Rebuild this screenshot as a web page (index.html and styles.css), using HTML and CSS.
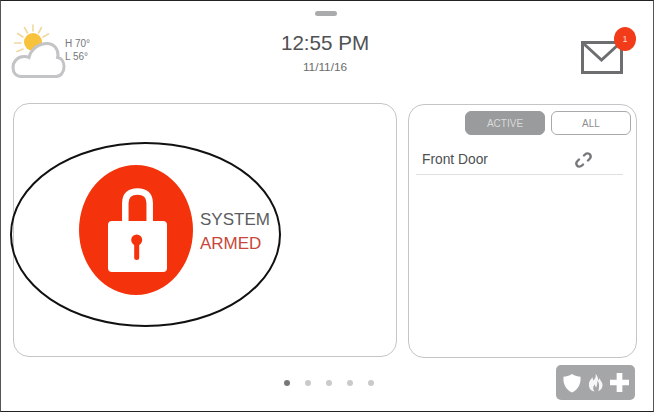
FILE: index.html
```html
<!DOCTYPE html>
<html lang="en">
<head>
<meta charset="utf-8">
<title>Security panel</title>
<link rel="stylesheet" href="styles.css">
</head>
<body>
<div class="screen">
  <div class="handle"></div>
  <header class="top">
    <div class="weather">
      <svg class="weather-icon" width="54" height="56" viewBox="0 0 54 56">
        <g stroke="#f0d9a0" stroke-width="1.600" stroke-linecap="round">
          <path d="M22 1V7M13.500 3.500L16.500 9M6.500 9.500L12 13M3.500 19H10M6 27.500L12 25M30.500 3.500L27.500 9M37.500 10L32 13"/>
        </g>
        <circle cx="22" cy="18" r="9" fill="#f7c23c"/>
        <path d="M10 52.500C5 52.500 2 48.500 2 43.500C2 37 7 32.500 13 32.500C15 32.500 17 33 18 33.500C20 25 28 19.500 36 19.500C43 19.500 47 25 47 31L46.500 33.500C51 34 53 38.500 53 43C53 48.500 49.500 52.500 45 52.500Z" fill="#fff" stroke="#c2c4c6" stroke-width="3"/>
      </svg>
      <div class="temps">
        <span>H 70°</span>
        <span>L 56°</span>
      </div>
    </div>
    <div class="clock">
      <div class="time">12:55 PM</div>
      <div class="date">11/11/16</div>
    </div>
    <div class="mail">
      <svg width="42" height="33" viewBox="0 0 42 33">
        <path d="M1.500 1.500H40.500V31.500H1.500Z" fill="#fff" stroke="#6d6e70" stroke-width="3"/>
        <path d="M3 3L20.500 19L38 3" fill="none" stroke="#6d6e70" stroke-width="3"/>
      </svg>
      <span class="badge">1</span>
    </div>
  </header>
  <main class="panels">
    <section class="status-card">
      <div class="ring"></div>
      <div class="status">
        <div class="lock-disc">
          <svg width="64" height="84" viewBox="-4 0 64 84">
            <path d="M17.300 36V15C17.300 7 22 3.500 29.500 3.500C37 3.500 41.700 7 41.700 15V36" fill="none" stroke="#fff" stroke-width="6.500"/>
            <rect x="0" y="33" width="59" height="51" rx="4" fill="#fff"/>
            <circle cx="28.700" cy="52" r="5.500" fill="#f4330d"/>
            <rect x="26.200" y="53" width="5" height="19" rx="2.500" fill="#f4330d"/>
          </svg>
        </div>
        <div class="status-text">
          <div class="system">SYSTEM</div>
          <div class="armed">ARMED</div>
        </div>
      </div>
    </section>
    <section class="zones-card">
      <div class="tabs">
        <span class="tab tab-active">ACTIVE</span>
        <span class="tab">ALL</span>
      </div>
      <div class="zone">
        <span>Front Door</span>
        <svg class="zone-icon" width="17" height="16" viewBox="0 0 17 16">
          <g fill="none" stroke="#77787a" stroke-width="2.400" stroke-linecap="round">
            <path d="M9 3.500L10 2.500C11.500 1 14 1 15 2.500C16 4 15.500 6 14.500 7L13 8.500"/>
            <path d="M8 12.500L7 13.500C5.500 15 3 15 2 13.500C1 12 1.500 10 2.500 9L4 7.500"/>
          </g>
        </svg>
      </div>
    </section>
  </main>
  <footer class="bottom">
    <div class="dots">
      <i class="dot dot-on"></i><i class="dot"></i><i class="dot"></i><i class="dot"></i><i class="dot"></i>
    </div>
    <div class="emergency">
      <svg width="18" height="20" viewBox="0 0 18 22" preserveAspectRatio="none"><path d="M9 1C12 3 15 4 17.500 4C18 11 16 17.500 9 21.500C2 17.500 0 11 .5 4C3 4 6 3 9 1Z" fill="#fff"/></svg>
      <svg width="15" height="19" viewBox="0 0 16 22" preserveAspectRatio="none"><path d="M8 1C9 5 7 7 6 9C5 7 5 6 5 5C2 8 .5 11 1 15C1.500 19 4 21 7 21.500C5 19 5 16 7 13C7.500 15 8 16 9 16.500C9.500 14 10 12 10 9C12 11 12.500 15 11 21C14 20 15.500 17 15.500 14C15.500 10 13 9 12.500 6C11.500 7 11.500 8 11 9C11 6 10 3 8 1Z" fill="#fff" opacity=".9"/></svg>
      <svg width="19" height="19" viewBox="0 0 20 20"><path d="M7 0H13V7H20V13H13V20H7V13H0V7H7Z" fill="#fff"/></svg>
    </div>
  </footer>
</div>
</body>
</html>
```
FILE: styles.css
```css
* { box-sizing: border-box; }
html, body { margin: 0; padding: 0; background: #fff; }
.screen {
  position: relative;
  width: 654px;
  height: 412px;
  background: #fff;
  border-top: 1px solid #222;
  border-left: 1px solid #555;
  border-right: 1px solid #555;
  border-bottom: 1px solid #222;
  font-family: "Liberation Sans", Arial, sans-serif;
  overflow: hidden;
  display: flex;
  flex-direction: column;
}
.handle {
  align-self: center;
  width: 22px;
  height: 5px;
  margin-top: 10px;
  margin-right: 2px;
  border-radius: 3px;
  background: #aaabad;
  flex: none;
}
.top {
  flex: none;
  height: 87px;
  display: flex;
  align-items: flex-start;
  padding: 0 30px 0 10px;
}
.weather { display: flex; align-items: flex-start; width: 214px; padding-top: 8px; flex: none; }
.weather-icon { flex: none; overflow: visible; }
.temps {
  display: flex;
  flex-direction: column;
  margin: 13px 0 0 0;
  font-size: 10px;
  line-height: 13px;
  color: #76777a;
}
.clock { width: 200px; text-align: center; padding-top: 14px; color: #505153; flex: none; }
.time { font-size: 20.600px; line-height: 26px; }
.date { font-size: 11.800px; line-height: 14px; margin-top: 4px; color: #6a6b6d; }
.mail { position: relative; width: 42px; margin-top: 25px; margin-left: auto; }
.mail svg { display: block; }
.badge {
  position: absolute;
  top: -14px;
  right: -13px;
  width: 22px;
  height: 24px;
  border-radius: 50%;
  background: #f23b18;
  color: #fcd9d0;
  font-size: 9px;
  line-height: 24px;
  text-align: center;
}
.panels {
  flex: none;
  display: flex;
  align-items: flex-start;
  padding-left: 12px;
  gap: 11px;
}
.status-card {
  width: 384px;
  height: 254px;
  border: 1px solid #c4c5c6;
  border-radius: 16px;
  flex: none;
}
.ring {
  position: absolute;
  left: 9px;
  top: 141px;
  width: 271px;
  height: 185px;
  border: 2px solid #111;
  border-radius: 50%;
}
.status {
  position: relative;
  display: flex;
  align-items: center;
  height: 100%;
  padding: 0 0 0 65px;
}
.lock-disc {
  width: 114px;
  height: 130px;
  border-radius: 50%;
  background: #f4330d;
  display: flex;
  align-items: center;
  justify-content: center;
  flex: none;
}
.status-text { margin: 4px 0 0 7px; font-size: 17px; line-height: 24px; }
.system { color: #5b5d60; }
.armed { color: #c9473a; }
.zones-card {
  width: 229px;
  height: 254px;
  margin-top: 1px;
  border: 1px solid #c4c5c6;
  border-radius: 16px;
  flex: none;
  padding: 6px 5px 0 7px;
}
.tabs { display: flex; justify-content: flex-end; gap: 6px; }
.tab {
  width: 80px;
  height: 24px;
  border: 1px solid #a9aaab;
  border-radius: 6px;
  font-size: 10px;
  line-height: 23px;
  text-align: center;
  color: #8d8e90;
}
.tab-active { background: #9a9b9d; border-color: #9a9b9d; color: #d9d9da; }
.zone {
  display: flex;
  align-items: center;
  justify-content: space-between;
  width: 207px;
  height: 40px;
  padding: 10px 31px 0 6px;
  border-bottom: 1px solid #dfdfe0;
  font-size: 13.800px;
  color: #4e4f51;
}
.bottom {
  flex: 1;
  display: flex;
  justify-content: flex-end;
  align-items: flex-start;
  padding-right: 18px;
  position: relative;
}
.dots {
  position: absolute;
  left: 283px;
  top: 22px;
  display: flex;
  gap: 15px;
}
.dot { width: 6px; height: 6px; border-radius: 50%; background: #c9cacb; }
.dot-on { background: #77787a; }
.emergency {
  margin-top: 7px;
  width: 79px;
  height: 35px;
  border-radius: 5px;
  background: #a5a6a8;
  display: flex;
  align-items: center;
  justify-content: center;
  gap: 7px;
}
```
